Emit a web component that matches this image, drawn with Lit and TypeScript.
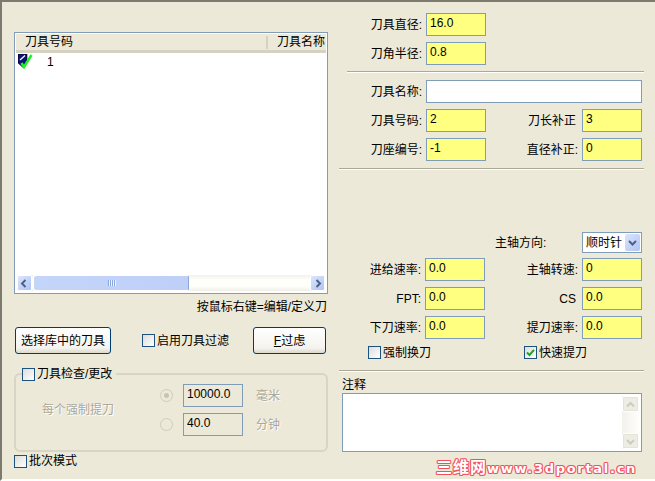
import { LitElement, html, css, svg } from "lit";
import { customElement } from "lit/decorators.js";

const arrow = (dir: "l" | "r" | "u" | "d", color: string) => {
  const p = { l: "M7.5 3 4 6.5 7.5 10", r: "M5.5 3 9 6.5 5.5 10", u: "M3 8.5 6.5 5 10 8.5", d: "M3 5 6.5 8.5 10 5" }[dir];
  return html`<svg width="13" height="13" viewBox="0 0 13 13">${svg`<path d=${p} fill="none" stroke=${color} stroke-width="2"/>`}</svg>`;
};

@customElement("app-root")
export class AppRoot extends LitElement {
  static styles = css`
    :host {
      display: block;
      width: 655px;
      height: 481px;
      font: 12px/14px "Liberation Sans", "Noto Sans CJK SC", sans-serif;
      color: #000;
    }
    * { box-sizing: border-box; }
    .root {
      width: 655px; height: 481px;
      background: #ece9d8;
      border-top: 2px solid #7d7b70;
      border-left: 2px solid #7d7b70;
      border-bottom: 2px solid #fff;
      display: grid;
      grid-template-columns: 337px 1fr;
      overflow: hidden;
    }
    .left { padding: 30px 0 0 12px; display: flex; flex-direction: column; }
    .right { padding-top: 11px; display: flex; flex-direction: column; position: relative; }

    .list { width: 314px; height: 262px; border: 1px solid #7f9db9; background: #fff; padding: 1px; display: flex; flex-direction: column; }
    .lhead { height: 19px; background: #ece9d8; border-bottom: 3px solid #d6d2c2; display: flex; align-items: center; font-size: 12px; flex: none; }
    .lhead .c1 { width: 252px; padding-left: 9px; border-right: 2px solid #d6d2c2; height: 13px; line-height: 13px; }
    .lhead .c2 { padding-left: 9px; white-space: nowrap; }
    .lbody { flex: 1; display: flex; align-items: flex-start; padding: 1px 0 0 2px; gap: 14px; }
    .lbody span { line-height: 14px; padding-top: 1px; }
    .hsb { height: 16px; flex: none; display: flex; align-items: stretch; background: linear-gradient(#f3f1ec, #fefefb 30%, #fefefb 70%, #f0efe7); margin: 0 1px 1px 1px; }
    .sbtn { width: 15px; flex: none; background: linear-gradient(135deg, #dbe5fd, #afc4f5); border: 1px solid #fff; border-radius: 2px; display: flex; align-items: center; justify-content: center; }
    .thumb { width: 156px; margin-left: 1px; background: linear-gradient(90deg, #c4d5fb, #bed0f8); border: 1px solid #fff; border-right-color: #8ea5d8; border-radius: 3px; display: flex; align-items: center; justify-content: center; gap: 1px; }
    .thumb i { width: 1px; height: 6px; background: #8ca6e0; box-shadow: 1px 0 #eef3fe; margin-right: 0; }
    .gap { flex: 1; }

    .hint { text-align: right; width: 313px; margin-top: 6px; height: 14px; }
    .actions { display: flex; align-items: center; height: 27px; margin-top: 13px; }
    button { font: inherit; color: #000; padding: 0; height: 27px; border: 1px solid #003c74; border-radius: 3px; background: linear-gradient(#fff, #f4f3ee 80%, #dcd8ca); }
    .b1 { width: 96px; margin-left: 1px; }
    .b2 { width: 73px; margin-left: 24px; }
    u { text-decoration: underline; }

    .check { display: inline-flex; align-items: center; gap: 2px; white-space: nowrap; }
    .box { width: 13px; height: 13px; flex: none; border: 1px solid #1c5180; background: linear-gradient(135deg, #dcdcd7, #fff); display: block; }
    .box.on { display: flex; align-items: center; justify-content: center; }
    .c-filter { margin-left: 31px; }

    fieldset { margin: 13px 0 0 0; width: 314px; height: 85px; padding: 0; border: 2px solid #d8d5c4; border-radius: 6px; }
    legend { margin-left: 6px; padding: 0 4px 0 0; height: 14px; line-height: 14px; }
    .ggrid { display: grid; grid-template-columns: 145px 22px 60px auto; grid-auto-rows: 23px; row-gap: 6px; align-items: center; margin: 3px 0 0 0; }
    .dis { color: #aca899; text-shadow: 1px 1px 0 #fff; }
    .each { grid-row: 1 / span 2; padding-left: 26px; }
    .radio { width: 13px; height: 13px; border-radius: 50%; border: 1px solid #cfccbb; background: #ece9d8; display: flex; align-items: center; justify-content: center; margin-left: -1px; }
    .radio b { width: 5px; height: 5px; border-radius: 50%; background: #c6c3b4; }
    .r2 { grid-column: 2; }
    .ggrid .unit { padding-left: 13px; }
    .batch { margin: 2px 0 0 0; }

    input { font: inherit; color: #000; border: 1px solid #7f9db9; height: 23px; width: 60px; padding: 0 0 4px 3px; outline: none; background: #ffff80; display: block; border-radius: 0; }
    input.dinput { background: #ece9d8; }
    input.w { background: #fff; width: 216px; }

    .row { display: flex; align-items: center; height: 23px; }
    .lab { width: 83px; text-align: right; flex: none; white-space: nowrap; }
    .lab2 { width: 92px; text-align: right; flex: none; white-space: nowrap; }
    .row .lab + input { margin-left: 4px; }
    .row .lab2 + input { margin-left: 4px; }
    .row.low .lab { width: 82px; }
    .row.low .lab2 { width: 93px; }
    .pr { padding-right: 2px; }
    .mt6 { margin-top: 6px; }
    .sep { height: 2px; border-top: 1px solid #aca899; border-bottom: 1px solid #fff; flex: none; }
    .s1 { margin: 6px 11px 0 8px; }
    .s2 { margin: 7px 11px 0 0; }
    .s3 { margin: 11px 11px 0 0; }
    .r1 { margin-top: 7px; }
    .n1 { margin-top: 6px; }
    .sel { width: 60px; height: 21px; border: 1px solid #7f9db9; background: #fff; margin-left: 36px; display: flex; align-items: center; justify-content: space-between; padding: 0 1px 0 3px; }
    .selb { width: 15px; height: 17px; background: linear-gradient(135deg, #dbe5fd, #afc4f5); border-radius: 2px; display: flex; align-items: center; justify-content: center; }
    .spin { margin-top: 62px; height: 21px; padding-left: 156px; }
    .spin-l { white-space: nowrap; width: 51px; }
    .f1 { margin-top: 5px; }
    .checks { display: flex; height: 13px; margin-top: 7px; padding-left: 29px; }
    .checks .check + .check { margin-left: 93px; }
    .note { margin: 6px 0 0 3px; height: 14px; line-height: 14px; }
    .area { margin: 1px 0 0 3px; width: 300px; height: 59px; border: 1px solid #7f9db9; background: #fff; display: flex; justify-content: flex-end; padding: 2px; }
    .vsb { width: 17px; display: flex; flex-direction: column; justify-content: space-between; background: linear-gradient(90deg, #f3f1ec, #fefefb); }
    .vb { height: 16px; background: #eeede5; border: 1px solid #fff; border-radius: 2px; display: flex; align-items: center; justify-content: center; box-shadow: 0 0 0 1px #e6e3d5 inset; }
    .mark { align-self: flex-end; margin: 8px 18px 0 0; height: 15px; font: bold 13px/15px "DejaVu Sans", "Noto Sans CJK SC", sans-serif; color: #fff; letter-spacing: 1.7px; white-space: nowrap;
      text-shadow: 1px 0 #f0505c, -1px 0 #f0505c, 0 1px #f0505c, 0 -1px #f0505c, 1px 1px #f77, -1px -1px #f77, 1px -1px #f77, -1px 1px #f77; }
    .mark span { font-size: 16px; letter-spacing: 1px; }
  `;

  private box(on = false) {
    return on
      ? html`<span class="box on"><svg width="11" height="11" viewBox="0 0 11 11"><path d="M2 5.5 4.5 8 9 2.8" fill="none" stroke="#21a121" stroke-width="2"/></svg></span>`
      : html`<span class="box"></span>`;
  }

  private row1(label: string, value: string) {
    return html`<span class="lab">${label}</span><input readonly value=${value} />`;
  }

  private row2(label: string, value: string, cls = "") {
    return html`<span class="lab2 ${cls}">${label}</span><input readonly value=${value} />`;
  }

  render() {
    return html`<div class="root">
      <div class="left">
        <div class="list">
          <div class="lhead"><div class="c1">刀具号码</div><div class="c2">刀具名称</div></div>
          <div class="lbody">
            <svg width="15" height="15" viewBox="0 0 15 15">
              <path d="M0 0H9V9L4.5 13 0 9Z" fill="#10107a" stroke="#000" stroke-width=".6"/>
              <path d="M2 6 7 1.5" stroke="#fff" stroke-width="1.2"/>
              <path d="M3.5 9 6 13 13.5 1" fill="none" stroke="#22f022" stroke-width="2.6"/>
            </svg>
            <span>1</span>
          </div>
          <div class="hsb">
            <div class="sbtn">${arrow("l", "#4d6185")}</div>
            <div class="thumb"><i></i><i></i><i></i><i></i></div>
            <div class="gap"></div>
            <div class="sbtn">${arrow("r", "#4d6185")}</div>
          </div>
        </div>
        <div class="hint">按鼠标右键=编辑/定义刀</div>
        <div class="actions">
          <button class="b1">选择库中的刀具</button>
          <label class="check c-filter">${this.box()}启用刀具过滤</label>
          <button class="b2"><u>F</u>过虑</button>
        </div>
        <fieldset>
          <legend><span class="check">${this.box()}刀具检查/更改</span></legend>
          <div class="ggrid">
            <div class="dis each">每个强制提刀</div>
            <div class="radio"><b></b></div>
            <input class="dinput" readonly value="10000.0" />
            <div class="dis unit">毫米</div>
            <div class="radio r2"></div>
            <input class="dinput" readonly value="40.0" />
            <div class="dis unit">分钟</div>
          </div>
        </fieldset>
        <label class="check batch">${this.box()}批次模式</label>
      </div>
      <div class="right">
        <div class="row">${this.row1("刀具直径:", "16.0")}</div>
        <div class="row mt6">${this.row1("刀角半径:", "0.8")}</div>
        <div class="sep s1"></div>
        <div class="row r1"><span class="lab">刀具名称:</span><input class="w" readonly value="" /></div>
        <div class="row n1">${this.row1("刀具号码:", "2")}${this.row2("刀长补正", "3", "pr")}</div>
        <div class="row mt6">${this.row1("刀座编号:", "-1")}${this.row2("直径补正:", "0")}</div>
        <div class="sep s2"></div>
        <div class="row spin">
          <span class="spin-l">主轴方向:</span>
          <div class="sel"><span>顺时针</span><span class="selb">${arrow("d", "#4d6185")}</span></div>
        </div>
        <div class="row low f1">${this.row1("进给速率:", "0.0")}${this.row2("主轴转速:", "0")}</div>
        <div class="row low mt6">${this.row1("FPT:", "0.0")}${this.row2("CS", "0.0", "pr")}</div>
        <div class="row low mt6">${this.row1("下刀速率:", "0.0")}${this.row2("提刀速率:", "0.0")}</div>
        <div class="checks"><label class="check">${this.box()}强制换刀</label><label class="check">${this.box(true)}快速提刀</label></div>
        <div class="sep s3"></div>
        <div class="note">注释</div>
        <div class="area"><div class="vsb"><div class="vb">${arrow("u", "#cfccbb")}</div><div class="vb">${arrow("d", "#cfccbb")}</div></div></div>
        <div class="mark"><span>三维网</span>www.3dportal.cn</div>
      </div>
    </div>`;
  }
}
